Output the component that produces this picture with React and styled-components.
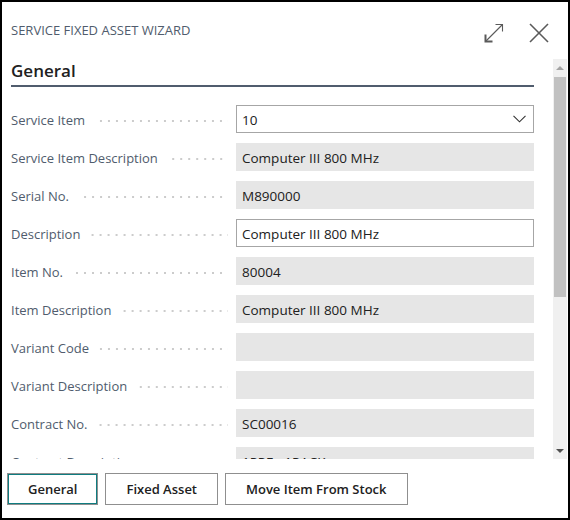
import React from 'react';
import styled, { createGlobalStyle } from 'styled-components';

const GlobalStyle = createGlobalStyle`
  html, body {
    margin: 0;
    padding: 0;
    background: #ffffff;
  }
  body {
    font-family: "Segoe UI", "Open Sans", "Noto Sans", sans-serif;
  }
`;

const fields = [
  { label: 'Service Item', value: '10', kind: 'select' },
  { label: 'Service Item Description', value: 'Computer III 800 MHz', kind: 'readonly' },
  { label: 'Serial No.', value: 'M890000', kind: 'readonly' },
  { label: 'Description', value: 'Computer III 800 MHz', kind: 'edit' },
  { label: 'Item No.', value: '80004', kind: 'readonly' },
  { label: 'Item Description', value: 'Computer III 800 MHz', kind: 'readonly' },
  { label: 'Variant Code', value: '', kind: 'readonly' },
  { label: 'Variant Description', value: '', kind: 'readonly' },
  { label: 'Contract No.', value: 'SC00016', kind: 'readonly' },
  { label: 'Contract Description', value: '1PPF - 1PACK', kind: 'readonly' },
];

function ExpandIcon() {
  return (
    <svg width="20" height="20" viewBox="0 0 20 20" fill="none" stroke="#5a5a5a" strokeWidth="1.1">
      <line x1="1.5" y1="18.5" x2="18.5" y2="1.5" />
      <polyline points="1.5,11.5 1.5,18.5 8.5,18.5" strokeWidth="2" />
      <polyline points="11.5,1.5 18.5,1.5 18.5,8.5" />
    </svg>
  );
}

function CloseIcon() {
  return (
    <svg width="20" height="20" viewBox="0 0 20 20" fill="none" stroke="#5a5a5a" strokeWidth="1.6">
      <line x1="1" y1="1" x2="19" y2="19" />
      <line x1="19" y1="1" x2="1" y2="19" />
    </svg>
  );
}

function Chevron() {
  return (
    <svg width="13" height="8" viewBox="0 0 13 8" fill="none" stroke="#333" strokeWidth="1.1">
      <polyline points="0.5,0.8 6.5,6.8 12.5,0.8" />
    </svg>
  );
}

function App() {
  return (
    <>
      <GlobalStyle />
      <Dialog>
        <Header>
          <Title>Service Fixed Asset Wizard</Title>
          <HeaderActions>
            <IconButton aria-label="Expand"><ExpandIcon /></IconButton>
            <IconButton aria-label="Close"><CloseIcon /></IconButton>
          </HeaderActions>
        </Header>
        <Body>
          <Scroller>
            <SectionTitle>General</SectionTitle>
            <Fields>
              {fields.map((f) => (
                <Row key={f.label}>
                  <Label>
                    <LabelText>{f.label}</LabelText>
                    <Leader />
                  </Label>
                  <Field $kind={f.kind}>
                    <FieldValue>{f.value}</FieldValue>
                    {f.kind === 'select' && <Chevron />}
                  </Field>
                </Row>
              ))}
            </Fields>
          </Scroller>
          <ScrollBar>
            <ScrollArrow $dir="up" />
            <Track>
              <Thumb $size={220} />
            </Track>
            <ScrollArrow $dir="down" />
          </ScrollBar>
        </Body>
        <Footer>
          <Button $focused>General</Button>
          <Button>Fixed Asset</Button>
          <Button>Move Item From Stock</Button>
        </Footer>
      </Dialog>
    </>
  );
}

const Dialog = styled.div`
  width: 570px;
  height: 520px;
  box-sizing: border-box;
  border: 2px solid #000;
  background: #fff;
  display: flex;
  flex-direction: column;
  overflow: hidden;
`;

const Header = styled.header`
  height: 57px;
  flex: none;
  box-sizing: border-box;
  padding: 0 19px 0 9px;
  display: flex;
  align-items: center;
  justify-content: space-between;
`;

const Title = styled.h1`
  margin: 0;
  padding-bottom: 2px;
  font-size: 13px;
  font-weight: 400;
  line-height: 16px;
  text-transform: uppercase;
  color: #505c6d;
`;

const HeaderActions = styled.div`
  display: flex;
  align-items: center;
  gap: 25px;
  padding-top: 4px;
`;

const IconButton = styled.button`
  border: 0;
  padding: 0;
  background: none;
  width: 20px;
  height: 20px;
  display: flex;
`;

const Body = styled.div`
  height: 400px;
  flex: none;
  display: flex;
`;

const Scroller = styled.div`
  flex: 1;
  overflow: hidden;
  padding: 0 19px 0 9px;
`;

const SectionTitle = styled.h2`
  margin: 0;
  padding: 1px 0 3px;
  font-size: 17px;
  line-height: 22px;
  font-weight: 600;
  color: #212121;
  border-bottom: 2px solid #505c6d;
`;

const Fields = styled.div`
  margin-top: 18px;
  display: flex;
  flex-direction: column;
  gap: 10px;
`;

const Row = styled.div`
  display: grid;
  grid-template-columns: 225px 1fr;
  height: 28px;
`;

const Label = styled.div`
  display: flex;
  align-items: center;
  min-width: 0;
`;

const LabelText = styled.span`
  padding-top: 2px;
  font-size: 13px;
  color: #505c6d;
  white-space: nowrap;
`;

const Leader = styled.span`
  flex: 1;
  height: 2px;
  margin: 4px 8px 0 10px;
  background-image: linear-gradient(to right, #cccccc 0 2px, transparent 2px);
  background-size: 8px 2px;
  background-repeat: repeat-x;
  background-position: right center;
`;

const Field = styled.div`
  box-sizing: border-box;
  height: 28px;
  padding: 0 7px 0 5px;
  display: flex;
  align-items: center;
  justify-content: space-between;
  border: 1px solid ${(p) => (p.$kind === 'readonly' ? 'transparent' : '#a6a6a6')};
  background: ${(p) => (p.$kind === 'readonly' ? '#e6e6e6' : '#ffffff')};
`;

const FieldValue = styled.span`
  padding-top: 1px;
  font-size: 13.5px;
  color: #212121;
  white-space: nowrap;
`;

const ScrollBar = styled.div`
  width: 14px;
  margin-right: 1px;
  flex: none;
  background: #f0f0f0;
  display: flex;
  flex-direction: column;
`;

const ScrollArrow = styled.div`
  height: 17px;
  flex: none;
  display: flex;
  align-items: center;
  justify-content: center;
  &::before {
    content: '';
    width: 0;
    height: 0;
    border-left: 4px solid transparent;
    border-right: 4px solid transparent;
    ${(p) =>
      p.$dir === 'up'
        ? 'border-bottom: 4px solid #a3a3a3; margin-top: 0;'
        : 'border-top: 4px solid #505050; margin-top: 1px;'}
  }
`;

const Track = styled.div`
  flex: 1;
  padding: 1px 1px 0;
`;

const Thumb = styled.div`
  height: ${(p) => p.$size}px;
  background: #c1c1c1;
`;

const Footer = styled.footer`
  flex: 1;
  display: flex;
  align-items: flex-start;
  gap: 7px;
  padding: 14px 0 0 5px;
`;

const Button = styled.button`
  height: 32px;
  box-sizing: border-box;
  padding: 0 20px;
  border: 1px solid #8f8f8f;
  background: #ffffff;
  font-family: inherit;
  font-size: 13px;
  font-weight: 600;
  color: #212121;
  box-shadow: ${(p) => (p.$focused ? 'inset 0 0 0 1px #0f7c80' : 'none')};
  cursor: pointer;
`;

export default App;
